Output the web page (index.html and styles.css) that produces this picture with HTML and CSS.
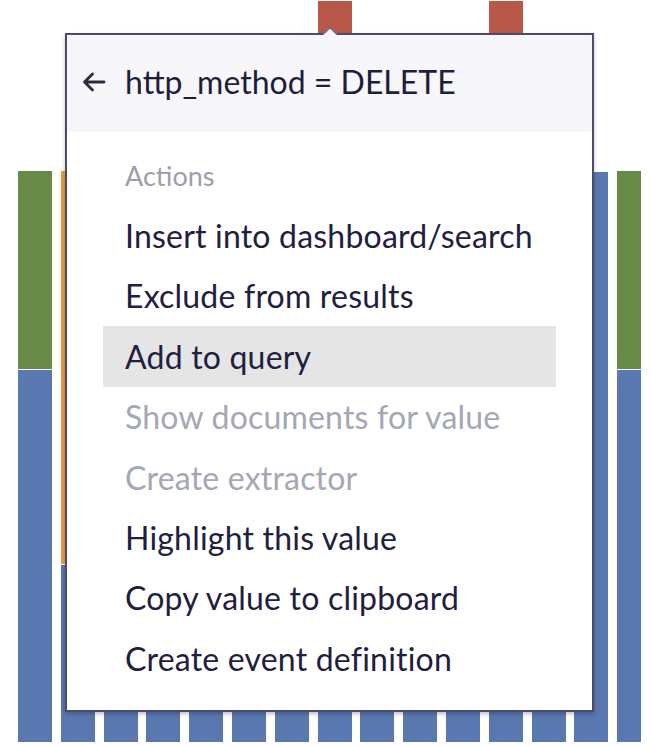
FILE: index.html
```html
<!DOCTYPE html>
<html lang="en">
<head>
    <meta charset="UTF-8">
    <title>Field value actions</title>
    <link rel="stylesheet" href="styles.css">
</head>
<body>
    <div class="chart">
        <div class="bar edge">
            <div class="seg green" style="height: 198px"></div>
            <div class="seg blue" style="height: 372px"></div>
        </div>
        <div class="bar">
            <div class="seg orange" style="height: 393px"></div>
            <div class="seg blue" style="height: 177px"></div>
        </div>
        <div class="bar"><div class="seg blue" style="height: 570px"></div></div>
        <div class="bar"><div class="seg blue" style="height: 570px"></div></div>
        <div class="bar"><div class="seg blue" style="height: 570px"></div></div>
        <div class="bar"><div class="seg blue" style="height: 570px"></div></div>
        <div class="bar"><div class="seg blue" style="height: 570px"></div></div>
        <div class="bar">
            <div class="seg red" style="height: 170px"></div>
            <div class="seg blue" style="height: 570px"></div>
        </div>
        <div class="bar"><div class="seg blue" style="height: 570px"></div></div>
        <div class="bar"><div class="seg blue" style="height: 570px"></div></div>
        <div class="bar"><div class="seg blue" style="height: 570px"></div></div>
        <div class="bar">
            <div class="seg red" style="height: 170px"></div>
            <div class="seg blue" style="height: 570px"></div>
        </div>
        <div class="bar"><div class="seg blue" style="height: 570px"></div></div>
        <div class="bar"><div class="seg blue" style="height: 570px"></div></div>
        <div class="bar narrow">
            <div class="seg green" style="height: 198px"></div>
            <div class="seg blue" style="height: 372px"></div>
        </div>
    </div>

    <div class="popover">
        <div class="popover-arrow"></div>
        <div class="popover-title">
            <svg class="back" width="24" height="22" viewBox="0 0 24 22">
                <path d="M22 11H3M10.5 3L2.5 11l8 8" fill="none" stroke="#2a2a40" stroke-width="2.8" stroke-linecap="round" stroke-linejoin="round"/>
            </svg>
            <span>http_method = DELETE</span>
        </div>
        <ul class="menu">
            <li class="menu-header">Actions</li>
            <li class="menu-item">Insert into dashboard/search</li>
            <li class="menu-item">Exclude from results</li>
            <li class="menu-item active">Add to query</li>
            <li class="menu-item disabled">Show documents for value</li>
            <li class="menu-item disabled">Create extractor</li>
            <li class="menu-item">Highlight this value</li>
            <li class="menu-item">Copy value to clipboard</li>
            <li class="menu-item">Create event definition</li>
        </ul>
    </div>
</body>
</html>
```

FILE: styles.css
```css
body {
    margin: 0;
    background-color: #fff;
    font-family: Lato, "Open Sans", sans-serif;
    color: #1f2040;
}
.chart {
    display: flex;
    align-items: flex-end;
    gap: 8.8px;
    margin-left: 18px;
    height: 742px;
}
.bar {
    display: flex;
    flex-direction: column;
    width: 34px;
}
.bar.narrow {
    width: 24px;
}
.seg + .seg {
    border-top: 1px solid #fff;
}
.green { background-color: #688a48; }
.blue { background-color: #5a78b0; }
.orange { background-color: #ee9a45; }
.red { background-color: #b95848; }

/* popover floats over the histogram */
.popover {
    position: absolute;
    left: 65px;
    top: 33px;
    width: 525px;
    height: 675px;
    border: 2px solid #4d4a6a;
    background-color: #fff;
    box-shadow: 0 2px 4px rgba(0, 0, 0, 0.25);
}
.popover-arrow {
    position: absolute;
    top: -6px;
    left: 258px;
    width: 9px;
    height: 9px;
    background-color: #f7f7fb;
    border-top: 1.5px solid #4d4a6a;
    border-left: 1.5px solid #4d4a6a;
    transform: rotate(45deg);
}
.popover-title {
    position: relative;
    display: flex;
    align-items: center;
    height: 97px;
    padding-left: 15px;
    background-color: #f7f7fb;
    font-size: 32px;
    color: #1e1e3a;
}
.popover-title span {
    margin-top: -4px;
}
.back {
    margin-right: 19px;
    margin-top: -3px;
}
.menu {
    list-style: none;
    margin: 13px 36px 0;
    padding: 0;
}
.menu li {
    display: flex;
    align-items: center;
    height: 60.4px;
    padding-left: 22px;
    font-size: 32px;
    letter-spacing: 0.2px;
}
.menu .menu-header {
    font-size: 27px;
    letter-spacing: 0;
    color: #9d9eab;
}
.menu-item.active {
    background-color: #e5e5e5;
}
.menu-item.disabled {
    color: #a4a7b4;
}
```
